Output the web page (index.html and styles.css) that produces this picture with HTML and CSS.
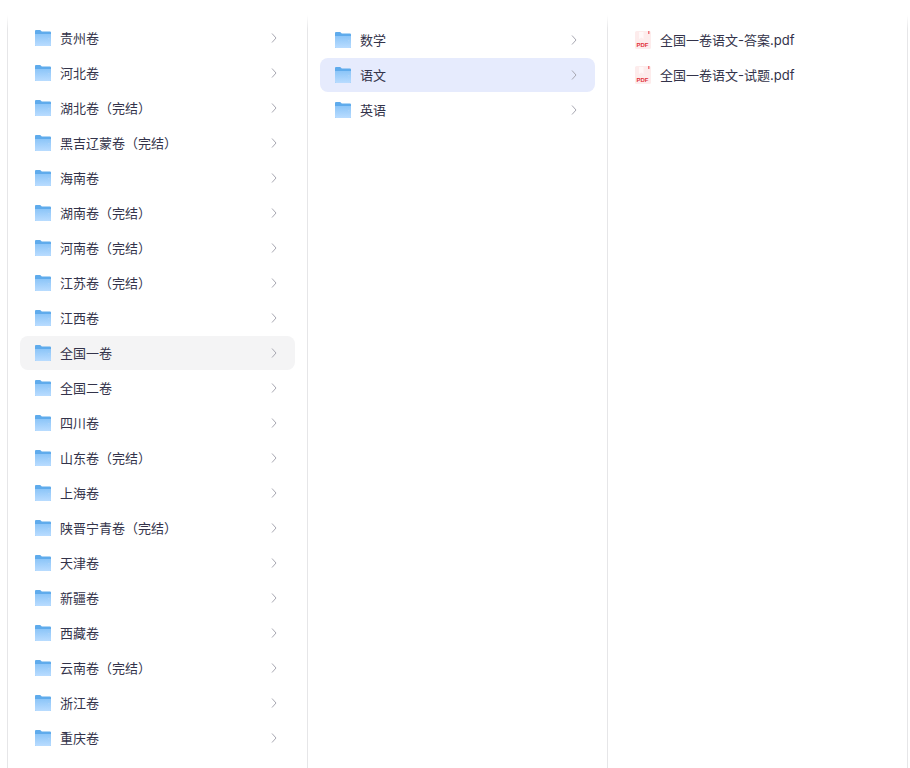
FILE: index.html
```html
<!DOCTYPE html>
<html lang="zh-CN">

<head>
    <meta charset="UTF-8">
    <meta name="viewport" content="width=device-width, initial-scale=1.0">
    <title>全国一卷语文</title>
    <link rel="stylesheet" href="styles.css">
</head>

<body>
    <svg class="defs" width="0" height="0">
        <defs>
            <linearGradient id="folderBody" x1="0" y1="0" x2="0" y2="1">
                <stop offset="0" stop-color="#8cc5f8" />
                <stop offset="1" stop-color="#b9dcff" />
            </linearGradient>
            <symbol id="folder" viewBox="0 0 16 16">
                <path d="M0 1a1 1 0 0 1 1-1h4.2l1.6 1.6H15a1 1 0 0 1 1 1V15a1 1 0 0 1-1 1H1a1 1 0 0 1-1-1z" fill="#5fabec" />
                <path d="M0 4h16v11a1 1 0 0 1-1 1H1a1 1 0 0 1-1-1z" fill="url(#folderBody)" />
                <rect x="13" y="8" width="1.5" height="1.5" fill="#a9d2f8" />
            </symbol>
            <symbol id="chevron" viewBox="0 0 8 12">
                <path d="M2 1.5 6 6l-4 4.5" fill="none" stroke="#a8a8b2" stroke-width="1" />
            </symbol>
            <symbol id="pdf" viewBox="0 0 16 18">
                <path d="M1.500 0h13a1.500 1.500 0 0 1 1.500 1.500v15a1.500 1.500 0 0 1-1.500 1.500h-13a1.500 1.500 0 0 1-1.500-1.500v-15a1.500 1.500 0 0 1 1.500-1.500z" fill="#fdecec" />
                <path d="M4 1h4.500v7l-2.200-1.500-2.300 1.500z" fill="#fff8f8" />
                <rect x="13" y="0" width="1.500" height="3" fill="#f0777c" />
                <text x="7.500" y="15.500" text-anchor="middle" font-family="Liberation Sans, sans-serif" font-size="6" font-weight="700" fill="#e2323a">PDF</text>
            </symbol>
        </defs>
    </svg>

    <div class="browser">
        <div class="column column-first">
            <div class="row"><svg class="icon"><use href="#folder" /></svg><span class="name">贵州卷</span><svg class="arrow"><use href="#chevron" /></svg></div>
            <div class="row"><svg class="icon"><use href="#folder" /></svg><span class="name">河北卷</span><svg class="arrow"><use href="#chevron" /></svg></div>
            <div class="row"><svg class="icon"><use href="#folder" /></svg><span class="name">湖北卷（完结）</span><svg class="arrow"><use href="#chevron" /></svg></div>
            <div class="row"><svg class="icon"><use href="#folder" /></svg><span class="name">黑吉辽蒙卷（完结）</span><svg class="arrow"><use href="#chevron" /></svg></div>
            <div class="row"><svg class="icon"><use href="#folder" /></svg><span class="name">海南卷</span><svg class="arrow"><use href="#chevron" /></svg></div>
            <div class="row"><svg class="icon"><use href="#folder" /></svg><span class="name">湖南卷（完结）</span><svg class="arrow"><use href="#chevron" /></svg></div>
            <div class="row"><svg class="icon"><use href="#folder" /></svg><span class="name">河南卷（完结）</span><svg class="arrow"><use href="#chevron" /></svg></div>
            <div class="row"><svg class="icon"><use href="#folder" /></svg><span class="name">江苏卷（完结）</span><svg class="arrow"><use href="#chevron" /></svg></div>
            <div class="row"><svg class="icon"><use href="#folder" /></svg><span class="name">江西卷</span><svg class="arrow"><use href="#chevron" /></svg></div>
            <div class="row row-hover"><svg class="icon"><use href="#folder" /></svg><span class="name">全国一卷</span><svg class="arrow"><use href="#chevron" /></svg></div>
            <div class="row"><svg class="icon"><use href="#folder" /></svg><span class="name">全国二卷</span><svg class="arrow"><use href="#chevron" /></svg></div>
            <div class="row"><svg class="icon"><use href="#folder" /></svg><span class="name">四川卷</span><svg class="arrow"><use href="#chevron" /></svg></div>
            <div class="row"><svg class="icon"><use href="#folder" /></svg><span class="name">山东卷（完结）</span><svg class="arrow"><use href="#chevron" /></svg></div>
            <div class="row"><svg class="icon"><use href="#folder" /></svg><span class="name">上海卷</span><svg class="arrow"><use href="#chevron" /></svg></div>
            <div class="row"><svg class="icon"><use href="#folder" /></svg><span class="name">陕晋宁青卷（完结）</span><svg class="arrow"><use href="#chevron" /></svg></div>
            <div class="row"><svg class="icon"><use href="#folder" /></svg><span class="name">天津卷</span><svg class="arrow"><use href="#chevron" /></svg></div>
            <div class="row"><svg class="icon"><use href="#folder" /></svg><span class="name">新疆卷</span><svg class="arrow"><use href="#chevron" /></svg></div>
            <div class="row"><svg class="icon"><use href="#folder" /></svg><span class="name">西藏卷</span><svg class="arrow"><use href="#chevron" /></svg></div>
            <div class="row"><svg class="icon"><use href="#folder" /></svg><span class="name">云南卷（完结）</span><svg class="arrow"><use href="#chevron" /></svg></div>
            <div class="row"><svg class="icon"><use href="#folder" /></svg><span class="name">浙江卷</span><svg class="arrow"><use href="#chevron" /></svg></div>
            <div class="row"><svg class="icon"><use href="#folder" /></svg><span class="name">重庆卷</span><svg class="arrow"><use href="#chevron" /></svg></div>
        </div>

        <div class="column">
            <div class="row"><svg class="icon"><use href="#folder" /></svg><span class="name">数学</span><svg class="arrow"><use href="#chevron" /></svg></div>
            <div class="row row-active"><svg class="icon"><use href="#folder" /></svg><span class="name">语文</span><svg class="arrow"><use href="#chevron" /></svg></div>
            <div class="row"><svg class="icon"><use href="#folder" /></svg><span class="name">英语</span><svg class="arrow"><use href="#chevron" /></svg></div>
        </div>

        <div class="column column-last">
            <div class="row"><svg class="icon icon-pdf"><use href="#pdf" /></svg><span class="name">全国一卷语文-答案.pdf</span></div>
            <div class="row"><svg class="icon icon-pdf"><use href="#pdf" /></svg><span class="name">全国一卷语文-试题.pdf</span></div>
        </div>
    </div>
</body>

</html>
```

FILE: styles.css
```css
* {
    margin: 0;
    padding: 0;
    box-sizing: border-box;
}

body {
    background: #fff;
    font-family: "Inter", "Noto Sans CJK SC", sans-serif;
    font-size: 13px;
    color: #33334a;
    height: 768px;
    overflow: hidden;
}

.defs {
    display: block;
    height: 0;
}

.browser {
    display: flex;
    height: 768px;
    margin-left: 7px;
    padding-top: 15px;
}

.column {
    position: relative;
    width: 300px;
    padding: 8px 12px 0 13px;
}

/* the divider fades out near the top */
.column::before,
.column-last::after {
    content: "";
    position: absolute;
    top: 0;
    bottom: 0;
    left: 0;
    width: 1px;
    background: linear-gradient(to bottom, #fff, #e6e6e8 14px);
}

.column-last {
    width: 301px;
    padding-right: 13px;
}

.column-last::after {
    left: auto;
    right: 0;
}

.column-first {
    padding-top: 6px;
}

.row {
    display: flex;
    align-items: center;
    height: 34px;
    margin-bottom: 1px;
    padding: 0 17px 0 15px;
    border-radius: 8px;
}

.row-hover {
    background: #f4f4f5;
}

.row-active {
    background: #e6ebfd;
}

.icon {
    flex: none;
    width: 16px;
    height: 16px;
    margin-right: 9px;
}

.icon-pdf {
    height: 18px;
}

.name {
    flex: 1;
    line-height: 20px;
    white-space: nowrap;
}

.arrow {
    flex: none;
    width: 8px;
    height: 12px;
}
```
